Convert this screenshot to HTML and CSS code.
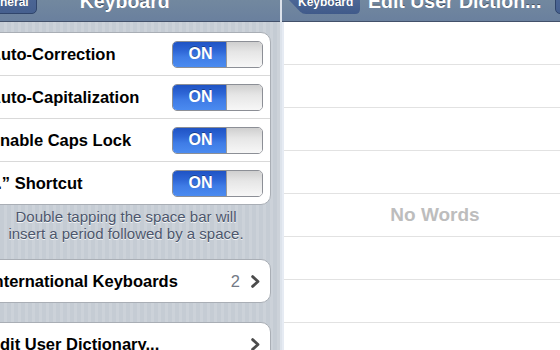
FILE: index.html
```html
<!DOCTYPE html>
<html>
<head>
<meta charset="utf-8">
<link rel="stylesheet" href="styles.css">
</head>
<body>
<div class="stage">
  <section class="screen screen-left">
    <header class="nav">
      <div class="nav-btn btn-general">General</div>
      <div class="nav-title title-left">Keyboard</div>
    </header>
    <div class="content-grouped">
      <div class="group">
        <div class="row">
          <span class="label">Auto-Correction</span>
          <span class="toggle"><span class="toggle-on">ON</span><span class="toggle-knob"></span></span>
        </div>
        <div class="row">
          <span class="label">Auto-Capitalization</span>
          <span class="toggle"><span class="toggle-on">ON</span><span class="toggle-knob"></span></span>
        </div>
        <div class="row">
          <span class="label">Enable Caps Lock</span>
          <span class="toggle"><span class="toggle-on">ON</span><span class="toggle-knob"></span></span>
        </div>
        <div class="row">
          <span class="label">“.” Shortcut</span>
          <span class="toggle"><span class="toggle-on">ON</span><span class="toggle-knob"></span></span>
        </div>
      </div>
      <p class="note">Double tapping the space bar will<br>insert a period followed by a space.</p>
      <div class="group group-single group-intl">
        <div class="row row-link">
          <span class="label">International Keyboards</span>
          <span class="value">2</span>
          <svg class="chevron" width="9" height="13" viewBox="0 0 9 13"><path d="M1.6 1.6 L7 6.5 L1.6 11.4" fill="none" stroke="#4b4b4b" stroke-width="2.8" stroke-linecap="round" stroke-linejoin="round"/></svg>
        </div>
      </div>
      <div class="group group-single group-dict">
        <div class="row row-link">
          <span class="label">Edit User Dictionary...</span>
          <svg class="chevron" width="9" height="13" viewBox="0 0 9 13"><path d="M1.6 1.6 L7 6.5 L1.6 11.4" fill="none" stroke="#4b4b4b" stroke-width="2.8" stroke-linecap="round" stroke-linejoin="round"/></svg>
        </div>
      </div>
    </div>
  </section>
  <div class="divider"></div>
  <section class="screen screen-right">
    <header class="nav">
      <div class="nav-btn btn-back">Keyboard</div>
      <div class="nav-title title-right">Edit User Diction...</div>
      <div class="nav-btn btn-edit">Edit</div>
    </header>
    <div class="content-plain">
      <div class="plain-row"></div>
      <div class="plain-row"></div>
      <div class="plain-row"></div>
      <div class="plain-row"></div>
      <div class="plain-row"><span class="empty">No Words</span></div>
      <div class="plain-row"></div>
      <div class="plain-row"></div>
      <div class="plain-row"></div>
    </div>
  </section>
</div>
</body>
</html>
```
FILE: styles.css
```css
* { box-sizing: border-box; margin: 0; padding: 0; }
html, body { width: 560px; height: 350px; overflow: hidden; }
body { font-family: "Liberation Sans", Arial, sans-serif; background: #fff; }

.stage { display: flex; width: 560px; height: 350px; overflow: hidden; }
.screen { display: flex; flex-direction: column; overflow: hidden; flex: none; height: 350px; }
.screen-left { width: 280px; }
.divider { width: 2px; flex: none; background: #dde3eb; }
.screen-right { width: 278px; }

/* navigation bar (top half cropped) */
.nav {
  height: 22px;
  flex: none;
  display: flex;
  align-items: flex-end;
  overflow: hidden;
  background: linear-gradient(#72889f, #6a809e);
  border-bottom: 1px solid #42506a;
}
.nav-title {
  flex: none;
  height: 24px;
  line-height: 24px;
  margin-bottom: 8px;
  font-size: 19.5px;
  font-weight: bold;
  color: #fff;
  white-space: nowrap;
  text-shadow: 0 -1px 0 rgba(0, 0, 0, 0.45);
}
.title-left { margin-left: 43px; }
.title-right { margin-left: 8px; }

.nav-btn {
  flex: none;
  height: 30px;
  padding-top: 10px;
  line-height: 14px;
  font-size: 12px;
  font-weight: bold;
  color: #fff;
  white-space: nowrap;
  text-shadow: 0 -1px 0 rgba(0, 0, 0, 0.5);
  background: linear-gradient(#8b9ebb 0, #5f77a1 50%, #4b6594 51%, #46608f 100%);
  border: 1px solid #30456b;
  border-radius: 5px;
}
.btn-general {
  margin-left: -33px;
  margin-bottom: 7px;
  padding-left: 16px;
  padding-right: 7px;
}
.btn-back {
  width: 72px;
  margin-left: 6px;
  margin-bottom: 7px;
  padding-top: 11px;
  padding-left: 10px;
  border: none;
  border-radius: 0;
  background: linear-gradient(#8b9ebb 0, #5f77a1 50%, #4d6796 51%, #405a8a 100%);
  clip-path: path('M0 15 L12 2.5 Q14.5 0 18 0 L67 0 Q72 0 72 5 L72 25 Q72 30 67 30 L18 30 Q14.5 30 12 27.5 Z');
}
.btn-edit {
  margin-left: 14px;
  margin-bottom: 7px;
  padding-left: 10px;
  padding-right: 10px;
}

/* grouped table */
.content-grouped {
  flex: 1;
  padding-top: 10px;
  background: repeating-linear-gradient(90deg, #c5ccd4 0 4px, #ccd2d9 4px 7px);
}
.group {
  background: #fff;
  border: 1px solid #a9aeb5;
  border-radius: 10px;
  margin: 0 9px 0 -30px;
}
.row {
  height: 42px;
  display: flex;
  align-items: center;
  padding: 0 7px 0 18px;
}
.row + .row {
  height: 43px;
  border-top: 1px solid #d9d9d9;
}
.label {
  flex: 1;
  font-size: 16.5px;
  font-weight: bold;
  color: #000;
  white-space: nowrap;
}

.toggle {
  flex: none;
  display: flex;
  width: 91px;
  height: 27px;
  border: 1px solid #8c8f96;
  border-radius: 5px;
  overflow: hidden;
}
.toggle-on {
  width: 53px;
  display: flex;
  align-items: center;
  justify-content: center;
  padding-left: 2px;
  font-size: 16px;
  font-weight: bold;
  color: #fff;
  text-shadow: 0 -1px 0 rgba(0, 0, 0, 0.35);
  background: linear-gradient(#1f53c4 0, #2e66d6 35%, #3f7ce6 60%, #4b8bf0 100%);
}
.toggle-knob {
  flex: 1;
  border-left: 1px solid #9a9a9a;
  background: linear-gradient(#cfcfcf 0, #e6e6e6 40%, #f7f7f7 100%);
}

.note {
  margin: 3px 9px 0 -30px;
  padding-left: 11px;
  text-align: center;
  font-size: 15px;
  line-height: 17px;
  color: #4c566c;
  text-shadow: 0 1px 0 rgba(255, 255, 255, 0.8);
}
.group-intl { margin-top: 17px; }
.group-dict { margin-top: 19px; }
.row-link { padding-right: 10px; }
.value {
  flex: none;
  margin-right: 11px;
  font-size: 16.5px;
  color: #737a86;
}
.chevron { flex: none; display: block; }

/* plain list */
.content-plain {
  flex: 1;
  background: #fff;
  border-left: 2px solid #e6ebf3;
}
.plain-row {
  height: 43px;
  border-bottom: 1px solid #e2e2e2;
  display: flex;
  align-items: center;
  padding-left: 26px;
  justify-content: center;
}
.empty {
  font-size: 19px;
  font-weight: bold;
  color: #bdbdbd;
  text-shadow: 0 1px 0 #fff;
}
```
